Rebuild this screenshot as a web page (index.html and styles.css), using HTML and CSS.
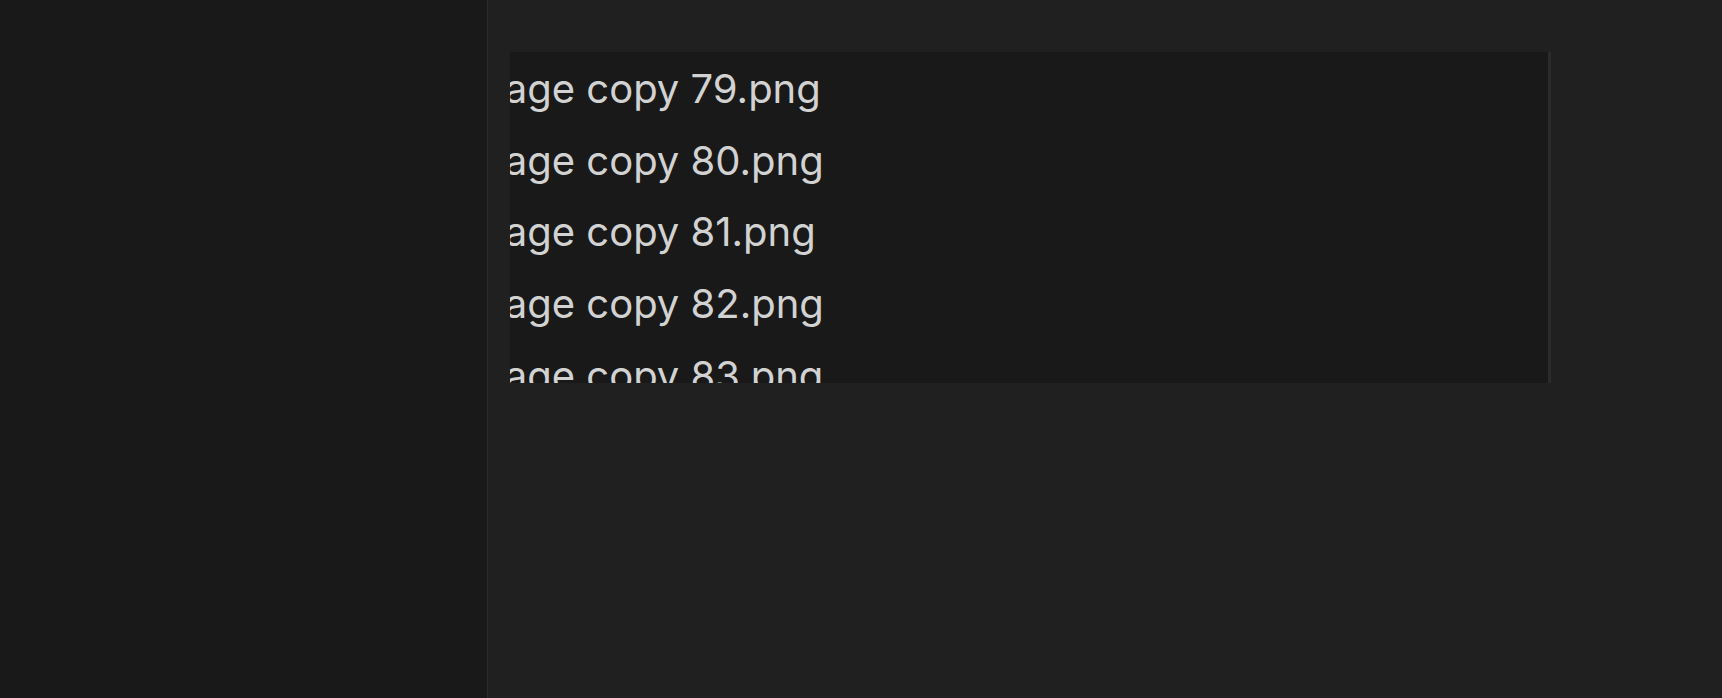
FILE: index.html
```html
<!DOCTYPE html>
<html lang="en">
<head>
<meta charset="utf-8">
<title>Files</title>
<link rel="stylesheet" href="styles.css">
</head>
<body>
<div class="app">
  <aside class="sidebar"></aside>
  <main class="main">
    <div class="list">
      <div class="row">image copy 79.png</div>
      <div class="row">image copy 80.png</div>
      <div class="row">image copy 81.png</div>
      <div class="row">image copy 82.png</div>
      <div class="row">image copy 83.png</div>
    </div>
  </main>
</div>
</body>
</html>
```
FILE: styles.css
```css
html, body {
  margin: 0;
  padding: 0;
  height: 100%;
  background: #202020;
}
.app {
  display: flex;
  height: 100vh;
  overflow: hidden;
}
.sidebar {
  width: 487px;
  flex: none;
  background: #191919;
  border-right: 1px solid #2a2a2a;
}
.main {
  flex: 1;
  background: #202020;
  padding: 52px 0 0 22px;
}
.list {
  width: 1038px;
  height: 330px;
  background: #191919;
  border-right: 3px solid #2b2b2b;
  overflow: hidden;
  padding-top: 1px;
  box-sizing: content-box;
}
.row {
  margin-left: -50px;
  font-family: "Inter", "Liberation Sans", Arial, sans-serif;
  font-size: 40px;
  line-height: 71.7px;
  color: #d2d2d2;
  white-space: nowrap;
}
```
